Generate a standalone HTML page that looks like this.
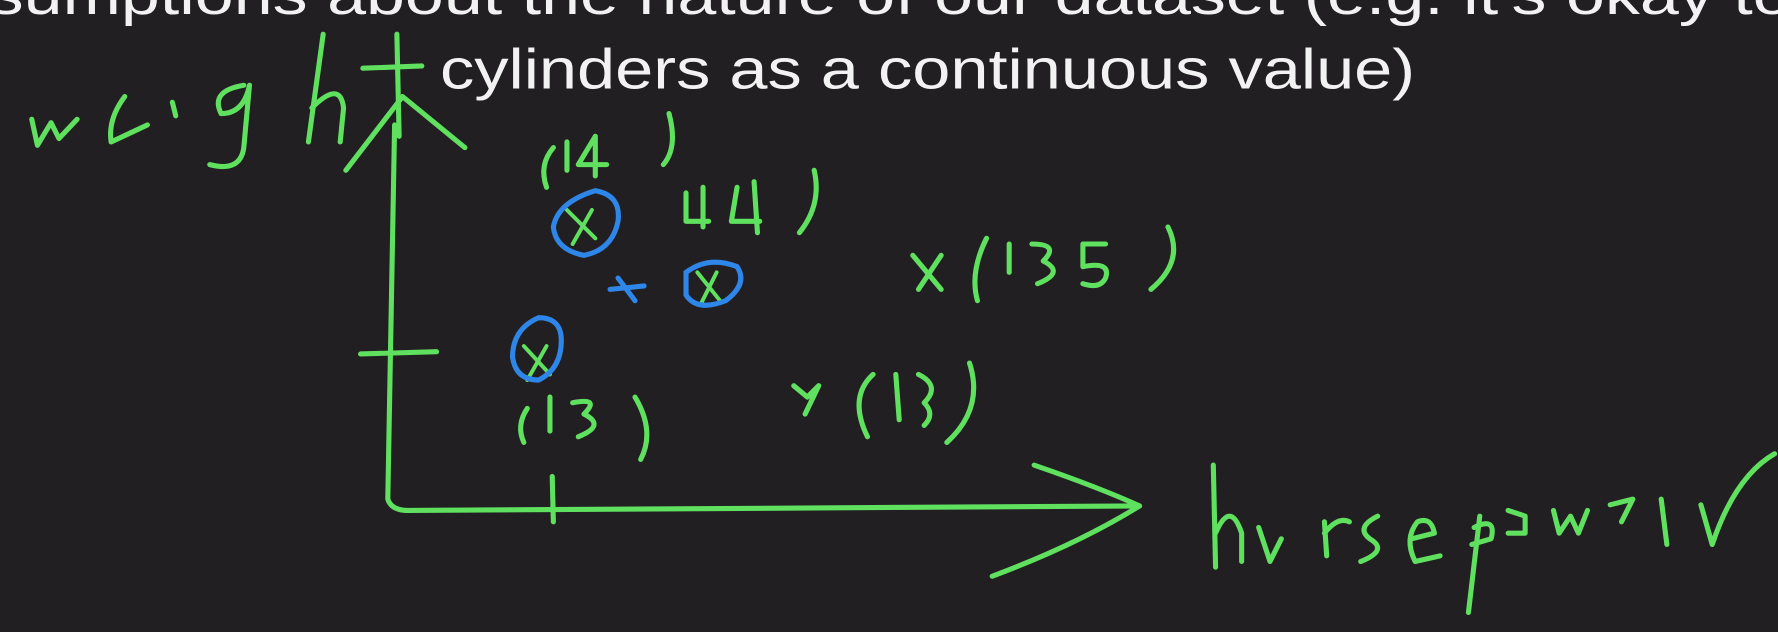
<!DOCTYPE html>
<html><head><meta charset="utf-8"><style>
html,body{margin:0;padding:0;background:#211f21;overflow:hidden}
svg{display:block}
</style></head><body>
<svg width="1778" height="632" viewBox="0 0 1568 557" xmlns="http://www.w3.org/2000/svg">
<rect width="1568" height="557" fill="#211f21"/>
<text x="-10" y="12" font-family="Liberation Sans, sans-serif" font-size="50" fill="#f2f2f2" textLength="1590" lengthAdjust="spacingAndGlyphs">sumptions about the nature of our dataset (e.g. it's okay to</text>
<text x="388" y="78" font-family="Liberation Sans, sans-serif" font-size="50" fill="#f2f2f2" textLength="860" lengthAdjust="spacingAndGlyphs">cylinders as a continuous value)</text>
<g fill="none" stroke="#5fe05f" stroke-width="4.5" stroke-linecap="round" stroke-linejoin="round">
<!-- weight -->
<path d="M28 105 L33 128 L45 108 L52 122 L68 105"/>
<path d="M110 85 Q95 105 98 125 L130 110"/>
<path d="M152 90 L155 102"/>
<path d="M215 75 Q185 80 195 100 Q215 100 220 75 L215 130 Q212 152 185 145"/>
<path d="M285 30 L272 125 M275 95 Q300 70 303 95 L300 125"/>
<path d="M350 30 L352 120 M320 60 L372 58"/>
<!-- y axis arrow -->
<path d="M305 150 L355 85 L410 130"/>
<path d="M348 110 L342 440 Q345 450 360 450 L1005 446"/>
<path d="M912 410 Q970 430 1005 446 Q950 480 875 508"/>
<path d="M318 312 L385 310"/>
<path d="M487 420 L488 460"/>
<!-- (14) -->
<path d="M488 130 Q475 145 482 165"/>
<path d="M500 125 L500 150"/>
<path d="M525 120 L510 145 L535 145 M525 120 L525 155"/>
<path d="M590 100 Q598 130 585 145"/>
<!-- 44) -->
<path d="M605 170 L605 195 L625 195 M620 165 L620 200"/>
<path d="M650 165 L645 195 L670 195 M665 160 L668 205"/>
<path d="M718 150 Q725 180 705 205"/>
<!-- x(13.5) -->
<path d="M805 225 L830 255 M830 225 L810 255"/>
<path d="M870 210 Q855 240 862 265"/>
<path d="M890 215 L890 240"/>
<path d="M910 215 Q935 215 920 230 Q940 240 915 250"/>
<path d="M975 215 L955 215 L955 235 Q980 230 975 245 Q970 255 955 250"/>
<path d="M1030 200 Q1045 230 1015 255"/>
<!-- (13) lower -->
<path d="M465 360 Q455 375 462 390"/>
<path d="M485 350 L485 380"/>
<path d="M505 355 Q530 350 515 365 Q535 375 510 385"/>
<path d="M560 350 Q578 380 565 405"/>
<!-- y(13) -->
<path d="M700 340 L712 350 L722 340 L710 365"/>
<path d="M770 330 Q748 350 765 385"/>
<path d="M790 330 L793 370"/>
<path d="M810 330 Q830 340 815 355 Q825 365 815 375"/>
<path d="M855 320 Q868 360 835 390"/>
<!-- horsepower -->
<path d="M1070 410 L1072 500 M1072 470 Q1085 440 1095 470 L1095 495"/>
<path d="M1110 465 L1120 495 L1130 475"/>
<path d="M1168 460 L1170 490 M1168 470 Q1180 455 1190 460"/>
<path d="M1215 455 Q1195 465 1208 475 Q1225 485 1200 495"/>
<path d="M1245 475 L1265 470 Q1262 455 1250 460 Q1238 475 1248 495 L1270 490"/>
<path d="M1305 455 L1295 540 M1300 465 Q1320 455 1315 475 L1298 480"/>
<path d="M1330 450 L1345 455 L1345 470 L1330 470"/>
<path d="M1370 450 L1375 470 L1385 455 L1392 470 L1400 450"/>
<path d="M1420 445 L1440 440 L1430 460"/>
<path d="M1465 440 L1470 480"/>
<path d="M1500 445 L1510 480 Q1530 420 1565 400"/>
</g>
<g fill="none" stroke="#5fe05f" stroke-width="3.5" stroke-linecap="round">
<path d="M500 185 L525 210 M522 185 L505 215"/>
<path d="M615 240 L635 265 M632 240 L618 268"/>
<path d="M462 305 L485 330 M482 305 L465 335"/>
</g>
<g fill="none" stroke="#2e86e8" stroke-width="4.5" stroke-linecap="round">
<path d="M525 168 Q548 172 545 195 Q540 220 515 225 Q490 220 488 200 Q492 178 525 168 Z"/>
<path d="M605 240 Q625 225 650 235 Q660 250 640 265 Q615 275 605 260 Z"/>
<path d="M475 280 Q495 280 495 300 Q495 325 475 335 Q455 335 452 315 Q452 290 475 280 Z"/>
<path d="M538 255 L568 252 M545 245 L560 265"/>
</g>
</svg>
</body></html>
